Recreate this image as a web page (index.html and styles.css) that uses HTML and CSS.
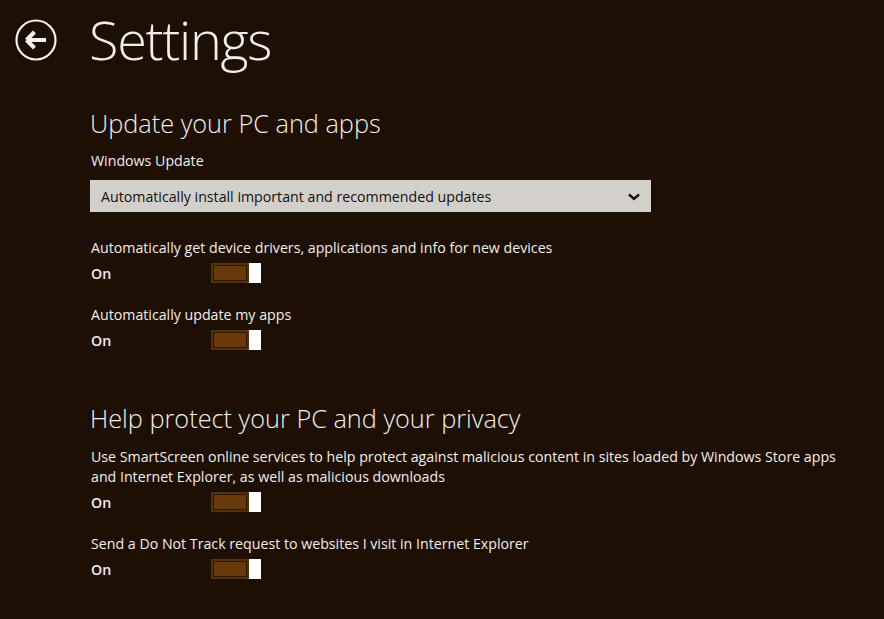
FILE: index.html
```html
<!DOCTYPE html>
<html>
<head>
<meta charset="utf-8">
<link rel="stylesheet" href="styles.css">
</head>
<body>
<div class="page">
  <header class="header">
    <div class="back">
      <svg width="42" height="42" viewBox="0 0 42 42">
        <circle cx="21" cy="21" r="19.5" fill="none" stroke="#f4f0ec" stroke-width="2.2"/>
        <path d="M11.5 21 L19.5 13 M11.5 21 L19.5 29 M11.5 21 L31 21" fill="none" stroke="#f4f0ec" stroke-width="4" stroke-linecap="butt" stroke-linejoin="miter"/>
      </svg>
    </div>
    <h1 class="title">Settings</h1>
  </header>
  <main class="content">
    <section class="section">
      <h2 class="heading">Update your PC and apps</h2>
      <div class="label">Windows Update</div>
      <div class="select">
        <span>Automatically install important and recommended updates</span>
        <svg class="chev" width="12" height="8" viewBox="0 0 12 8"><path d="M1 1.5 L6 6 L11 1.5" fill="none" stroke="#111" stroke-width="2.4"/></svg>
      </div>
      <div class="setting first">
        <div class="label">Automatically get device drivers, applications and info for new devices</div>
        <div class="state"><span class="on">On</span><span class="toggle"><span class="track"></span><span class="thumb"></span></span></div>
      </div>
      <div class="setting">
        <div class="label">Automatically update my apps</div>
        <div class="state"><span class="on">On</span><span class="toggle"><span class="track"></span><span class="thumb"></span></span></div>
      </div>
    </section>
    <section class="section second">
      <h2 class="heading">Help protect your PC and your privacy</h2>
      <div class="setting tight">
        <div class="label">Use SmartScreen online services to help protect against malicious content in sites loaded by Windows Store apps and Internet Explorer, as well as malicious downloads</div>
        <div class="state"><span class="on">On</span><span class="toggle"><span class="track"></span><span class="thumb"></span></span></div>
      </div>
      <div class="setting">
        <div class="label">Send a Do Not Track request to websites I visit in Internet Explorer</div>
        <div class="state"><span class="on">On</span><span class="toggle"><span class="track"></span><span class="thumb"></span></span></div>
      </div>
    </section>
  </main>
</div>
</body>
</html>
```
FILE: styles.css
```css
html, body {
  margin: 0;
  padding: 0;
  background: #1d0f04;
  height: 100%;
}
body {
  font-family: "Open Sans", "Noto Sans", sans-serif;
  color: #f2eeea;
  overflow: hidden;
}
.header {
  display: flex;
  align-items: flex-start;
  height: 92px;
}
.back {
  width: 42px;
  height: 42px;
  margin: 19px 0 0 15px;
}
.back svg { display: block; }
.title {
  margin: 5px 0 0 32px;
  font-size: 54px;
  font-weight: 300;
  line-height: 68px;
  letter-spacing: -1.3px;
}
.content {
  padding-left: 90px;
  width: 760px;
}
.heading {
  margin: 0;
  font-size: 25.3px;
  font-weight: 300;
  line-height: 34px;
  height: 34px;
}
.section { margin-top: 14px; }
.section.second { margin-top: 51px; }
.label {
  font-size: 14.2px;
  line-height: 20px;
  padding-left: 1px;
}
.section > .label { margin-top: 11px; }
.select {
  margin-top: 9px;
  width: 561px;
  height: 32px;
  background: #d3cfcb;
  color: #111;
  display: flex;
  align-items: center;
  justify-content: space-between;
  box-sizing: border-box;
  padding: 0 11px 0 11px;
  font-size: 14.2px;
}
.chev { margin-top: 2px; }
.setting { margin-top: 22px; }
.setting.first { margin-top: 26px; }
.section.second .setting.tight { margin-top: 12px; }
.state {
  display: flex;
  align-items: center;
  margin-top: 5px;
  height: 20px;
}
.on {
  width: 120px;
  padding-left: 1px;
  font-size: 14.2px;
  font-weight: 600;
}
.toggle {
  display: flex;
  width: 50px;
  height: 20px;
}
.track {
  width: 38px;
  height: 20px;
  box-sizing: border-box;
  border: 2px solid #563008;
  box-shadow: inset 0 0 0 1px #2b1604;
  background: #683a09;
}
.thumb {
  width: 12px;
  height: 20px;
  background: #ffffff;
}
```
